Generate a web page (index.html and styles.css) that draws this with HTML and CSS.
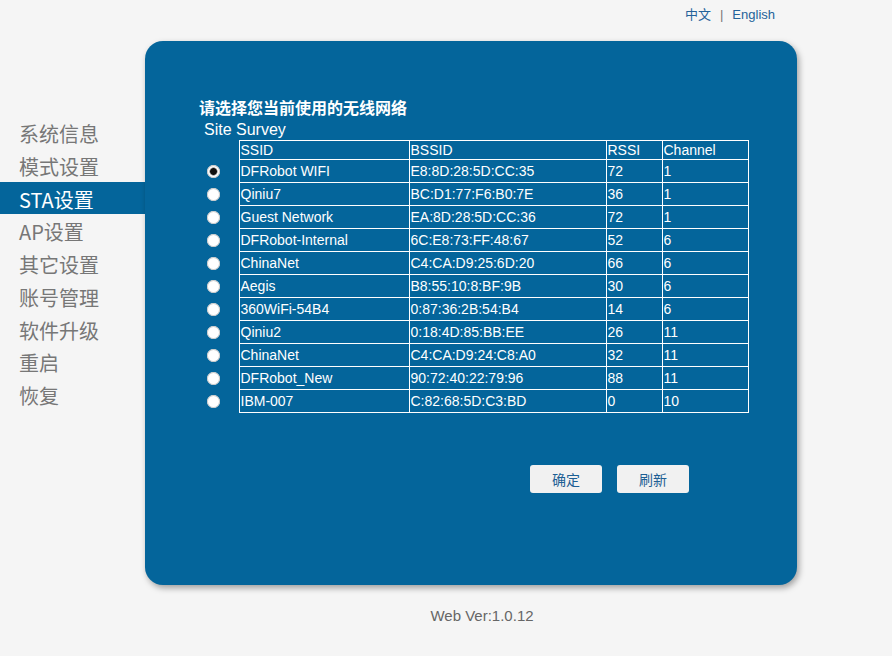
FILE: index.html
```html
<!DOCTYPE html>
<html>
<head>
	<meta charset="utf-8">
	<title>STA设置</title>
	<link rel="stylesheet" href="styles.css">
</head>
<body>
	<div class="lang"><a href="#">中文</a><span class="sep">|</span><a href="#">English</a></div>
	<div class="main">
		<ul class="menu">
			<li>系统信息</li>
			<li>模式设置</li>
			<li class="active">STA设置</li>
			<li>AP设置</li>
			<li>其它设置</li>
			<li>账号管理</li>
			<li>软件升级</li>
			<li>重启</li>
			<li>恢复</li>
		</ul>
		<div class="panel">
			<h3>请选择您当前使用的无线网络</h3>
			<p class="sub">Site Survey</p>
			<table>
				<colgroup>
					<col class="c0"><col class="c1"><col class="c2"><col class="c3"><col class="c4">
				</colgroup>
				<tr class="head">
					<th class="sel"></th>
					<th>SSID</th>
					<th>BSSID</th>
					<th>RSSI</th>
					<th>Channel</th>
				</tr>
				<tr><td class="sel"><input type="radio" name="ap" checked></td><td>DFRobot WIFI</td><td>E8:8D:28:5D:CC:35</td><td>72</td><td>1</td></tr>
				<tr><td class="sel"><input type="radio" name="ap"></td><td>Qiniu7</td><td>BC:D1:77:F6:B0:7E</td><td>36</td><td>1</td></tr>
				<tr><td class="sel"><input type="radio" name="ap"></td><td>Guest Network</td><td>EA:8D:28:5D:CC:36</td><td>72</td><td>1</td></tr>
				<tr><td class="sel"><input type="radio" name="ap"></td><td>DFRobot-Internal</td><td>6C:E8:73:FF:48:67</td><td>52</td><td>6</td></tr>
				<tr><td class="sel"><input type="radio" name="ap"></td><td>ChinaNet</td><td>C4:CA:D9:25:6D:20</td><td>66</td><td>6</td></tr>
				<tr><td class="sel"><input type="radio" name="ap"></td><td>Aegis</td><td>B8:55:10:8:BF:9B</td><td>30</td><td>6</td></tr>
				<tr><td class="sel"><input type="radio" name="ap"></td><td>360WiFi-54B4</td><td>0:87:36:2B:54:B4</td><td>14</td><td>6</td></tr>
				<tr><td class="sel"><input type="radio" name="ap"></td><td>Qiniu2</td><td>0:18:4D:85:BB:EE</td><td>26</td><td>11</td></tr>
				<tr><td class="sel"><input type="radio" name="ap"></td><td>ChinaNet</td><td>C4:CA:D9:24:C8:A0</td><td>32</td><td>11</td></tr>
				<tr><td class="sel"><input type="radio" name="ap"></td><td>DFRobot_New</td><td>90:72:40:22:79:96</td><td>88</td><td>11</td></tr>
				<tr><td class="sel"><input type="radio" name="ap"></td><td>IBM-007</td><td>C:82:68:5D:C3:BD</td><td>0</td><td>10</td></tr>
			</table>
			<div class="btns">
				<button>确定</button>
				<button>刷新</button>
			</div>
		</div>
	</div>
	<div class="foot">Web Ver:1.0.12</div>
</body>
</html>
```

FILE: styles.css
```css
*{padding:0; margin:0;}
body{background:#f5f5f5; font-family:"Liberation Sans", Arial, "Noto Sans CJK SC", sans-serif; width:892px;}
.lang{height:41px; line-height:30px; text-align:right; padding-right:117px; font-size:13px;}
.lang a{color:#24629a; text-decoration:none;}
.lang .sep{color:#777; margin:0 9px;}
.main{display:flex;}
.menu{list-style:none; width:145px; padding-top:75px; font-family:"Noto Sans CJK SC", sans-serif;}
.menu li{height:32.75px; box-sizing:border-box; padding:4px 0 0 19px; line-height:28.75px; font-size:20px; color:#777;}
.menu li.active{background:#04659b; color:#fff;}
.panel{width:598px; height:488px; padding:56px 0 0 54px; background:#04659b; border-radius:18px; box-shadow:2px 3px 6px rgba(0,0,0,0.35); color:#fff;}
.panel h3{font-size:16px; line-height:20px; font-family:"Noto Sans CJK SC", sans-serif; font-weight:bold;}
.sub{font-size:16px; line-height:20px; padding-left:5px; margin-top:3px;}
table{border-collapse:collapse; table-layout:fixed; width:549px; font-size:14px;}
.c0{width:40px;} .c1{width:170px;} .c2{width:197px;} .c3{width:56px;} .c4{width:86px;}
th,td{border:1px solid #fff; text-align:left; font-weight:normal; padding:0 1px; line-height:16px; white-space:nowrap;}
tr.head{height:19px;}
tr{height:23px;}
th.sel,td.sel{border:none; padding-left:8px;}
input[type=radio]{appearance:none; -webkit-appearance:none; display:block; width:13px; height:13px; border-radius:50%; background:#fff; box-shadow:inset 0 0 0 1px #c8c8c8; margin-top:1px;}
input[type=radio]:checked{background:radial-gradient(circle, #111 0, #111 3px, #777 3.5px, #fff 4.5px);}
.btns{display:flex; gap:15px; margin:52px 0 0 331px;}
.btns button{width:72px; height:28px; border:none; border-radius:3px; background:#f1f1f1; color:#1d5f94; font-size:14px; font-family:"Noto Sans CJK SC", sans-serif;}
.foot{margin-top:21px; line-height:20px; text-align:center; padding-left:72px; font-size:15px; color:#666;}
```
